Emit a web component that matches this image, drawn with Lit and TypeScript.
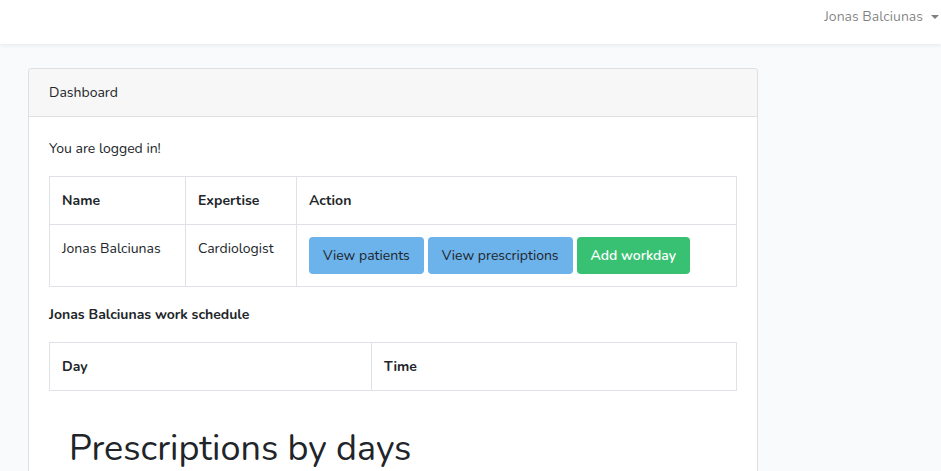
import { LitElement, html, css } from "lit";
import { customElement, property } from "lit/decorators.js";

interface Doctor {
  name: string;
  expertise: string;
}

@customElement("app-root")
export class AppRoot extends LitElement {
  @property({ attribute: false })
  doctor: Doctor = { name: "Jonas Balciunas", expertise: "Cardiologist" };

  static styles = css`
    :host {
      display: flex;
      flex-direction: column;
      min-height: 100vh;
      box-sizing: border-box;
      background: #f8fafc;
      color: #212529;
      font-family: Nunito, Lato, "Open Sans", sans-serif;
      font-size: 14px;
      font-weight: 400;
      line-height: 23px;
    }
    *,
    *::before,
    *::after {
      box-sizing: border-box;
    }
    .navbar {
      display: flex;
      justify-content: flex-end;
      height: 44px;
      padding: 5px 2px 0 16px;
      background: #fff;
      box-shadow: 0 2px 4px rgba(0, 0, 0, 0.06);
    }
    .user {
      display: flex;
      align-items: center;
      gap: 8px;
      height: 23px;
      padding: 0;
      border: 0;
      background: none;
      color: rgba(0, 0, 0, 0.5);
      font: inherit;
      cursor: pointer;
    }
    .caret {
      border: 4px solid transparent;
      border-top-color: currentColor;
      border-bottom: 0;
    }
    .content {
      display: flex;
      flex: 1;
      padding: 24px 28px 0;
    }
    .card {
      flex: 1;
      max-width: 730px;
      border: 1px solid #dfdfdf;
      border-bottom: 0;
      border-radius: 4px 4px 0 0;
      background: #fff;
    }
    .card-header {
      padding: 12px 20px;
      border-bottom: 1px solid #dfdfdf;
      border-radius: 3px 3px 0 0;
      background: #f7f7f7;
    }
    .card-body {
      padding: 20px 20px 0;
    }
    .text {
      margin: 0 0 16px;
    }
    .strong,
    .table th {
      font-weight: 700;
    }
    .table {
      width: 100%;
      margin: 0 0 16px;
      border-collapse: collapse;
    }
    .table th,
    .table td {
      padding: 12px;
      border: 1px solid #dee2e6;
      text-align: left;
      vertical-align: top;
    }
    .name {
      width: 136px;
    }
    .expertise {
      width: 111px;
    }
    .day {
      width: 322px;
    }
    .actions {
      display: flex;
      flex-wrap: wrap;
      gap: 4px;
    }
    .btn {
      height: 37px;
      padding: 0 14px;
      border: 0;
      border-radius: 4px;
      background: #6cb2eb;
      color: #212529;
      font: inherit;
      cursor: pointer;
    }
    .btn-success {
      background: #38c172;
      color: #fff;
      font-weight: 600;
    }
    .chart {
      padding: 20px 20px 0;
    }
    .title {
      margin: 0;
      font-size: 36px;
      font-weight: 400;
      line-height: 43px;
    }
  `;

  render() {
    const { name, expertise } = this.doctor;
    return html`
      <nav class="navbar">
        <button class="user" type="button" aria-haspopup="true">
          ${name}<span class="caret"></span>
        </button>
      </nav>
      <main class="content">
        <section class="card">
          <header class="card-header">Dashboard</header>
          <div class="card-body">
            <p class="text">You are logged in!</p>
            <table class="table">
              <thead>
                <tr>
                  <th class="name">Name</th>
                  <th class="expertise">Expertise</th>
                  <th>Action</th>
                </tr>
              </thead>
              <tbody>
                <tr>
                  <td>${name}</td>
                  <td>${expertise}</td>
                  <td>
                    <div class="actions">
                      <button class="btn" type="button">View patients</button>
                      <button class="btn" type="button">View prescriptions</button>
                      <button class="btn btn-success" type="button">Add workday</button>
                    </div>
                  </td>
                </tr>
              </tbody>
            </table>
            <p class="text strong">${name} work schedule</p>
            <table class="table">
              <thead>
                <tr>
                  <th class="day">Day</th>
                  <th>Time</th>
                </tr>
              </thead>
            </table>
            <div class="chart">
              <h1 class="title">Prescriptions by days</h1>
            </div>
          </div>
        </section>
      </main>
    `;
  }
}
